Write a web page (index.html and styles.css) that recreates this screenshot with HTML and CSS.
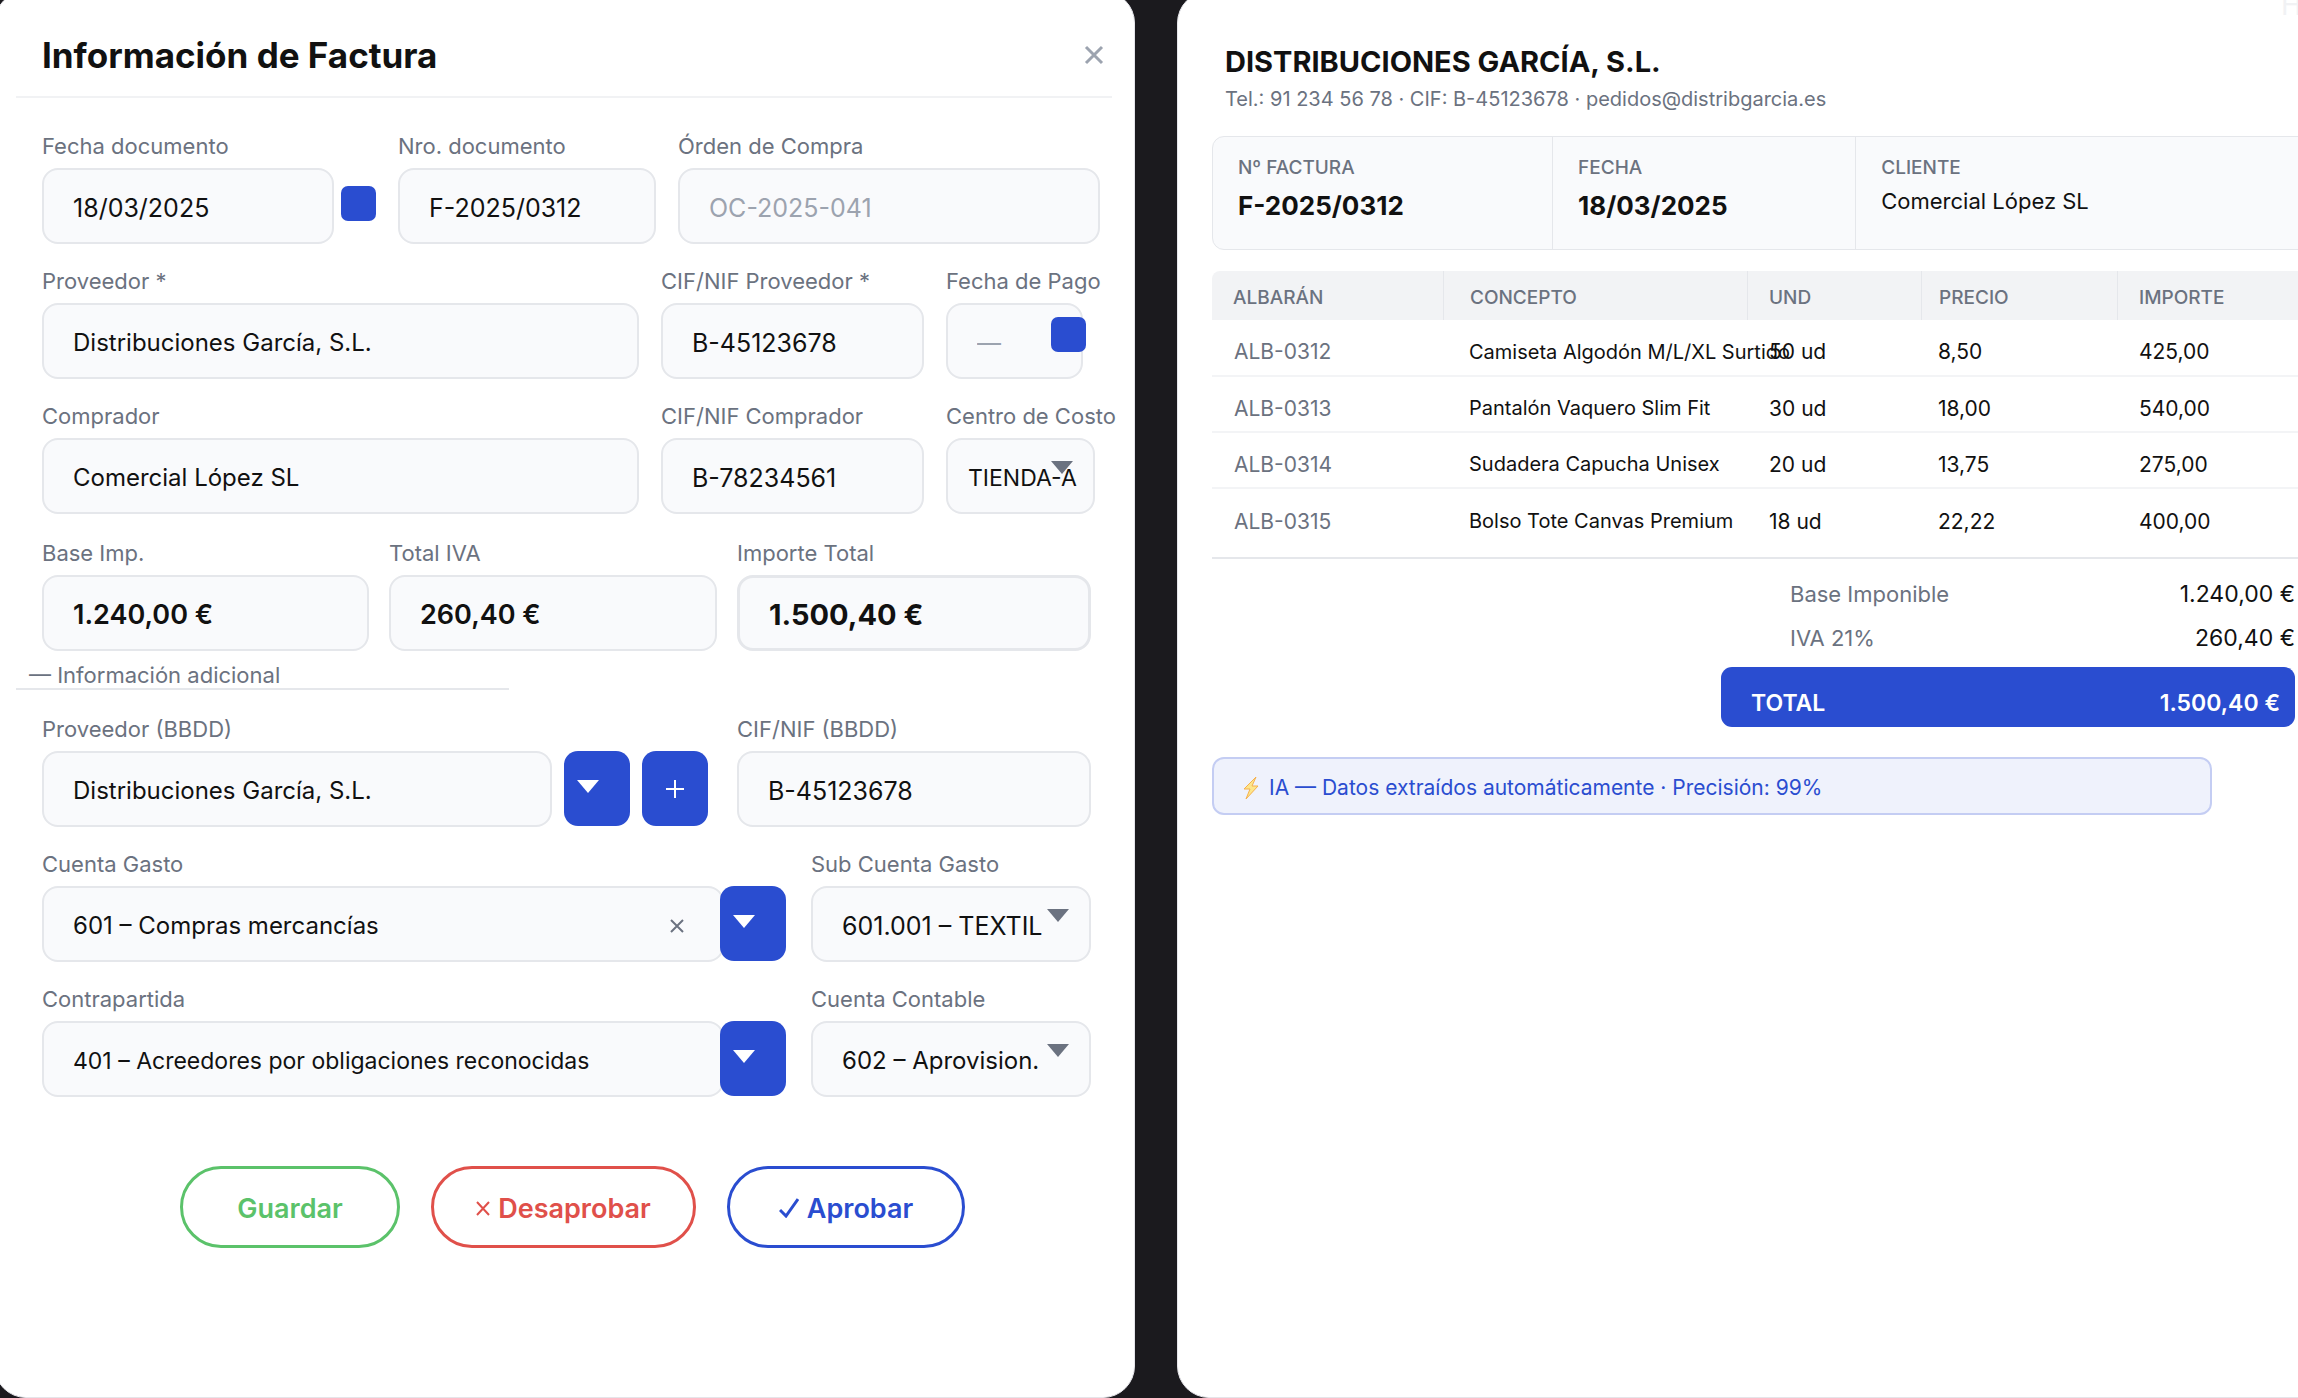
FILE: index.html
```html
<!DOCTYPE html>
<html lang="es">
<head>
  <meta charset="UTF-8" />
  <title>Información de Factura</title>
  <meta name="viewport" content="width=device-width, initial-scale=1.0" />
  <link rel="stylesheet" href="styles.css">
</head>
<body>

  <div class="workspace">

    <!-- Invoice form -->
    <section class="panel panel-form">
      <header class="panel-header">
        <h1>Información de Factura</h1>
        <button type="button" class="close-btn" aria-label="Cerrar">
          <svg width="20" height="20" viewBox="0 0 20 20"><path d="M2 2 L18 18 M18 2 L2 18" /></svg>
        </button>
      </header>

      <form class="invoice-form">
        <div class="row row-document">
          <div class="field">
            <label for="fechaDocumento">Fecha documento</label>
            <div class="control date-side">
              <input type="text" id="fechaDocumento" class="code" value="18/03/2025" />
              <button type="button" class="date-btn" aria-label="Elegir fecha documento"></button>
            </div>
          </div>
          <div class="field">
            <label for="nroDocumento">Nro. documento</label>
            <input type="text" id="nroDocumento" class="code" value="F-2025/0312" />
          </div>
          <div class="field">
            <label for="ordenCompra">Órden de Compra</label>
            <input type="text" id="ordenCompra" class="code" placeholder="OC-2025-041" />
          </div>
        </div>

        <div class="row row-party">
          <div class="field">
            <label for="proveedor">Proveedor *</label>
            <input type="text" id="proveedor" value="Distribuciones García, S.L." />
          </div>
          <div class="field">
            <label for="cifProveedor">CIF/NIF Proveedor *</label>
            <input type="text" id="cifProveedor" class="code" value="B-45123678" />
          </div>
          <div class="field">
            <label for="fechaPago">Fecha de Pago</label>
            <div class="control date-over">
              <input type="text" id="fechaPago" placeholder="—" />
              <button type="button" class="date-btn" aria-label="Elegir fecha de pago"></button>
            </div>
          </div>
        </div>

        <div class="row row-party">
          <div class="field">
            <label for="comprador">Comprador</label>
            <input type="text" id="comprador" value="Comercial López SL" />
          </div>
          <div class="field">
            <label for="cifComprador">CIF/NIF Comprador</label>
            <input type="text" id="cifComprador" class="code" value="B-78234561" />
          </div>
          <div class="field">
            <label for="centroCosto">Centro de Costo</label>
            <div class="control select-wrap select-small">
              <select id="centroCosto"><option>TIENDA-A</option></select>
            </div>
          </div>
        </div>

        <div class="row row-amounts">
          <div class="field">
            <label for="baseImp">Base Imp.</label>
            <input type="text" id="baseImp" class="amount" value="1.240,00 €" />
          </div>
          <div class="field">
            <label for="totalIva">Total IVA</label>
            <input type="text" id="totalIva" class="amount" value="260,40 €" />
          </div>
          <div class="field">
            <label for="importeTotal">Importe Total</label>
            <input type="text" id="importeTotal" class="amount amount-total" value="1.500,40 €" />
          </div>
        </div>

        <h2 class="section-title">— Información adicional</h2>

        <div class="row row-database">
          <div class="field">
            <label for="proveedorBbdd">Proveedor (BBDD)</label>
            <div class="control lookup">
              <input type="text" id="proveedorBbdd" value="Distribuciones García, S.L." />
              <button type="button" class="square-btn drop-btn" aria-label="Ver proveedores">
                <svg width="22" height="13" viewBox="0 0 22 13"><path d="M0 0 H22 L11 13 Z" /></svg>
              </button>
              <button type="button" class="square-btn add-btn" aria-label="Añadir proveedor">
                <svg width="18" height="18" viewBox="0 0 18 18"><path d="M9 0 V18 M0 9 H18" /></svg>
              </button>
            </div>
          </div>
          <div class="field">
            <label for="cifBbdd">CIF/NIF (BBDD)</label>
            <input type="text" id="cifBbdd" class="code" value="B-45123678" />
          </div>
        </div>

        <div class="row row-account">
          <div class="field">
            <label for="cuentaGasto">Cuenta Gasto</label>
            <div class="control joined">
              <input type="text" id="cuentaGasto" value="601 – Compras mercancías" />
              <button type="button" class="clear-btn" aria-label="Borrar cuenta gasto">
                <svg width="14" height="14" viewBox="0 0 14 14"><path d="M1 1 L13 13 M13 1 L1 13" /></svg>
              </button>
              <button type="button" class="square-btn drop-btn" aria-label="Ver cuentas de gasto">
                <svg width="22" height="13" viewBox="0 0 22 13"><path d="M0 0 H22 L11 13 Z" /></svg>
              </button>
            </div>
          </div>
          <div class="field">
            <label for="subCuenta">Sub Cuenta Gasto</label>
            <div class="control select-wrap">
              <select id="subCuenta" class="code"><option>601.001 – TEXTIL</option></select>
            </div>
          </div>
        </div>

        <div class="row row-account">
          <div class="field">
            <label for="contrapartida">Contrapartida</label>
            <div class="control joined">
              <input type="text" id="contrapartida" class="long-value" value="401 – Acreedores por obligaciones reconocidas" />
              <button type="button" class="square-btn drop-btn" aria-label="Ver contrapartidas">
                <svg width="22" height="13" viewBox="0 0 22 13"><path d="M0 0 H22 L11 13 Z" /></svg>
              </button>
            </div>
          </div>
          <div class="field">
            <label for="cuentaContable">Cuenta Contable</label>
            <div class="control select-wrap">
              <select id="cuentaContable"><option>602 – Aprovision.</option></select>
            </div>
          </div>
        </div>

        <div class="actions">
          <button type="button" class="btn btn-save">Guardar</button>
          <button type="button" class="btn btn-reject">
            <svg width="14" height="16" viewBox="0 0 14 16"><path d="M1 2 L13 15 M13 2 L1 15" /></svg>
            Desaprobar
          </button>
          <button type="button" class="btn btn-approve">
            <svg width="20" height="20" viewBox="0 0 20 20"><path d="M1 12 L7 18 L19 1" /></svg>
            Aprobar
          </button>
        </div>
      </form>
    </section>

    <!-- Invoice document -->
    <section class="panel panel-document">
      <span class="page-mark">H</span>

      <header class="company">
        <h2>DISTRIBUCIONES GARCÍA, S.L.</h2>
        <p>Tel.: 91 234 56 78 · CIF: B-45123678 · pedidos@distribgarcia.es</p>
      </header>

      <dl class="meta">
        <div>
          <dt>Nº FACTURA</dt>
          <dd>F-2025/0312</dd>
        </div>
        <div>
          <dt>FECHA</dt>
          <dd>18/03/2025</dd>
        </div>
        <div>
          <dt>CLIENTE</dt>
          <dd class="client">Comercial López SL</dd>
        </div>
      </dl>

      <table class="lines">
        <thead>
          <tr>
            <th class="col-note">ALBARÁN</th>
            <th class="col-item">CONCEPTO</th>
            <th class="col-units">UND</th>
            <th class="col-price">PRECIO</th>
            <th class="col-sum">IMPORTE</th>
          </tr>
        </thead>
        <tbody>
          <tr>
            <td class="col-note">ALB-0312</td>
            <td class="col-item">Camiseta Algodón M/L/XL Surtido</td>
            <td>50 ud</td>
            <td class="col-price">8,50</td>
            <td>425,00</td>
          </tr>
          <tr>
            <td class="col-note">ALB-0313</td>
            <td class="col-item">Pantalón Vaquero Slim Fit</td>
            <td>30 ud</td>
            <td class="col-price">18,00</td>
            <td>540,00</td>
          </tr>
          <tr>
            <td class="col-note">ALB-0314</td>
            <td class="col-item">Sudadera Capucha Unisex</td>
            <td>20 ud</td>
            <td class="col-price">13,75</td>
            <td>275,00</td>
          </tr>
          <tr>
            <td class="col-note">ALB-0315</td>
            <td class="col-item">Bolso Tote Canvas Premium</td>
            <td>18 ud</td>
            <td class="col-price">22,22</td>
            <td>400,00</td>
          </tr>
        </tbody>
      </table>

      <div class="totals">
        <div class="total-row"><span>Base Imponible</span><b>1.240,00 €</b></div>
        <div class="total-row"><span>IVA 21%</span><b>260,40 €</b></div>
        <div class="grand-total"><span>TOTAL</span><span>1.500,40 €</span></div>
      </div>

      <p class="ai-note">
        <svg width="18" height="24" viewBox="0 0 18 24"><path d="M14 1 L2 13 L8 13 L4 23 L16 10 L10 10 Z" /></svg>
        IA — Datos extraídos automáticamente · Precisión: 99%
      </p>
    </section>

  </div>

</body>
</html>
```
FILE: styles.css
```css
* {
  box-sizing: border-box;
}

body {
  margin: 0;
  background: #1b1a1e;
  color: #111;
  font-family: Inter, "Liberation Sans", sans-serif;
  overflow: hidden;
}

h1, h2, p, dl, dd {
  margin: 0;
}

button, input, select {
  font-family: inherit;
  color: inherit;
  margin: 0;
}

button {
  padding: 0;
  border: none;
  background: none;
  cursor: pointer;
}

svg {
  display: block;
  flex: none;
  fill: none;
  stroke: currentColor;
  stroke-width: 2;
}

/* both sheets bleed past the window edges */
.workspace {
  display: grid;
  grid-template-columns: 1141fr 1169fr;
  gap: 42px;
  min-height: calc(100vh + 9px);
  margin: -9px -48px 0 -6px;
}

.panel {
  min-width: 0;
  background: #fff;
  border: 1px solid #e5e5ea;
  border-radius: 32px;
}

/* Form */
.panel-form {
  padding: 0 22px 0 21px;
}

.panel-header {
  display: flex;
  justify-content: space-between;
  align-items: center;
  height: 106px;
  padding: 22px 8px 0 26px;
  border-bottom: 2px solid #f1f2f4;
}

.panel-header h1 {
  font-size: 35px;
  line-height: 44px;
  font-weight: 700;
}

.close-btn {
  color: #9ca3af;
}

.close-btn svg {
  stroke-width: 3;
}

.invoice-form {
  padding: 11px 12px 0 26px;
}

.row {
  display: grid;
  gap: 20px;
  padding-top: 23px;
}

.row-document {
  grid-template-columns: 334fr 258fr 422fr;
  gap: 22px;
}

.row-party {
  grid-template-columns: 597fr 263fr 154fr;
  gap: 22px;
}

.row-amounts {
  grid-template-columns: 327fr 328fr 354fr;
  padding-top: 25px;
  padding-right: 9px;
}

.row-database {
  grid-template-columns: 666fr 354fr;
  gap: 29px;
  padding-right: 9px;
}

.row-account {
  grid-template-columns: 744fr 280fr;
  gap: 25px;
  padding-right: 9px;
}

.field {
  min-width: 0;
}

.field label {
  display: block;
  margin-bottom: 8px;
  font-size: 22px;
  line-height: 28px;
  color: #6b7280;
  white-space: nowrap;
}

.field input,
.field select {
  display: block;
  width: 100%;
  min-width: 0;
  height: 76px;
  padding: 3px 16px 0 29px;
  border: 2px solid #e5e7eb;
  border-radius: 16px;
  background: #f9fafc;
  font-size: 24px;
  outline: none;
}

.field input::placeholder {
  color: #9ca3af;
  opacity: 1;
}

.field .code {
  font-size: 25px;
}

.field input.long-value {
  font-size: 23px;
}

.field input.amount {
  font-size: 27px;
  font-weight: 600;
}

.field input.amount-total {
  border-width: 3px;
  font-size: 29px;
  font-weight: 700;
}

.control {
  display: flex;
  position: relative;
}

.date-side {
  gap: 7px;
}

.date-side .date-btn {
  margin-top: 18px;
}

.date-btn {
  flex: none;
  width: 35px;
  height: 35px;
  border-radius: 7px;
  background: #2a4dd0;
}

.date-over {
  margin-right: 17px;
}

.date-over .date-btn {
  position: absolute;
  top: 14px;
  right: -3px;
}

.select-wrap select {
  appearance: none;
}

.select-wrap::after {
  content: "";
  position: absolute;
  top: 23px;
  right: 22px;
  border: 11px solid transparent;
  border-top: 13px solid #6b7280;
  border-bottom: none;
  pointer-events: none;
}

.select-small {
  margin-right: 5px;
}

.select-small select {
  padding-left: 20px;
  padding-right: 0;
  font-size: 23px;
}

.square-btn {
  display: flex;
  flex: none;
  width: 66px;
  height: 75px;
  border-radius: 14px;
  background: #2a4dd0;
  color: #fff;
}

.drop-btn {
  padding: 29px 13px;
}

.drop-btn svg {
  fill: currentColor;
  stroke: none;
}

.add-btn {
  align-items: center;
  justify-content: center;
}

.lookup {
  gap: 12px;
}

.joined .square-btn {
  margin-left: -4px;
  z-index: 1;
}

.clear-btn {
  position: absolute;
  top: 33px;
  right: 102px;
  color: #6b7280;
}

.section-title {
  width: 493px;
  margin: 11px 0 2px -26px;
  padding-left: 13px;
  border-bottom: 2px solid #e5e7eb;
  font-size: 22px;
  line-height: 26px;
  font-weight: 400;
  color: #6b7280;
}

.actions {
  display: flex;
  justify-content: center;
  gap: 31px;
  margin-top: 69px;
  padding-left: 3px;
}

.btn {
  display: flex;
  align-items: center;
  justify-content: center;
  gap: 8px;
  height: 82px;
  padding-top: 2px;
  border: 3px solid currentColor;
  border-radius: 41px;
  font-size: 27px;
  font-weight: 600;
}

.btn-save {
  width: 220px;
  color: #5bc26a;
}

.btn-reject {
  width: 265px;
  color: #e0504a;
}

.btn-approve {
  width: 238px;
  color: #2a4dd0;
}

.btn-approve svg {
  stroke-width: 3;
}

/* Document */
.panel-document {
  position: relative;
  padding: 0 34px;
}

.page-mark {
  position: absolute;
  top: -5px;
  right: 38px;
  width: 26px;
  font-size: 28px;
  line-height: 36px;
  color: #f1f2f4;
}

.company {
  padding: 51px 13px 0;
}

.company h2 {
  font-size: 29px;
  line-height: 38px;
  font-weight: 700;
}

.company p {
  font-size: 20px;
  line-height: 36px;
  color: #6b7280;
}

.meta {
  display: grid;
  grid-template-columns: 340fr 304fr 456fr;
  height: 114px;
  margin-top: 19px;
  border: 1px solid #e5e7eb;
  border-radius: 12px;
  background: #f9fafc;
}

.meta > div {
  padding: 18px 25px 0;
}

.meta > div + div {
  border-left: 1px solid #e5e7eb;
}

.meta dt {
  font-size: 19px;
  line-height: 26px;
  font-weight: 500;
  color: #6b7280;
}

.meta dd {
  padding-top: 7px;
  font-size: 26px;
  line-height: 36px;
  font-weight: 700;
}

.meta dd.client {
  padding-top: 2px;
  font-size: 22px;
  font-weight: 400;
}

.lines {
  width: 100%;
  margin-top: 21px;
  table-layout: fixed;
  border-collapse: separate;
  border-spacing: 0;
  white-space: nowrap;
  text-align: left;
}

.lines th {
  height: 49px;
  padding: 4px 0 0 21px;
  background: #f2f3f5;
  font-size: 19px;
  font-weight: 500;
  color: #6b7280;
}

.lines th + th {
  border-left: 1px solid #e5e7eb;
}

.lines th:first-child {
  border-radius: 8px 0 0 0;
}

.lines td {
  height: 56px;
  padding: 8px 0 0 22px;
  border-bottom: 2px solid #f3f4f6;
  font-size: 21px;
}

.lines tr:first-child td {
  height: 57px;
}

.lines tr:last-child td {
  height: 70px;
  padding-bottom: 12px;
  border-color: #e5e7eb;
}

.lines th.col-note { width: 231px; }
.lines th.col-item { width: 304px; }
.lines th.col-units { width: 174px; }
.lines th.col-price { width: 196px; }

.lines .col-item {
  padding-left: 26px;
}

.lines td.col-item {
  font-size: 20px;
}

.lines .col-price {
  padding-left: 17px;
}

.lines td.col-note {
  color: #6b7280;
}

.totals {
  width: 574px;
  margin: 13px 16px 0 auto;
}

.total-row {
  display: flex;
  justify-content: space-between;
  padding-left: 69px;
  font-size: 23px;
  line-height: 44px;
}

.total-row span {
  color: #6b7280;
  font-size: 22px;
}

.total-row b {
  font-weight: 400;
}

.grand-total {
  display: flex;
  justify-content: space-between;
  margin-top: 7px;
  padding: 11px 15px 0 30px;
  height: 60px;
  border-radius: 11px;
  background: #2a4dd0;
  color: #fff;
  font-size: 23px;
  line-height: 50px;
  font-weight: 600;
}

.ai-note {
  display: flex;
  align-items: center;
  gap: 9px;
  width: 91%;
  height: 58px;
  margin-top: 30px;
  padding: 3px 28px 0;
  border: 2px solid #c4cdf3;
  border-radius: 12px;
  background: #eff2fc;
  color: #2a4dd0;
  font-size: 21px;
}

.ai-note svg {
  fill: #fde68a;
  stroke: #f5b04c;
  stroke-width: 1;
}
```
